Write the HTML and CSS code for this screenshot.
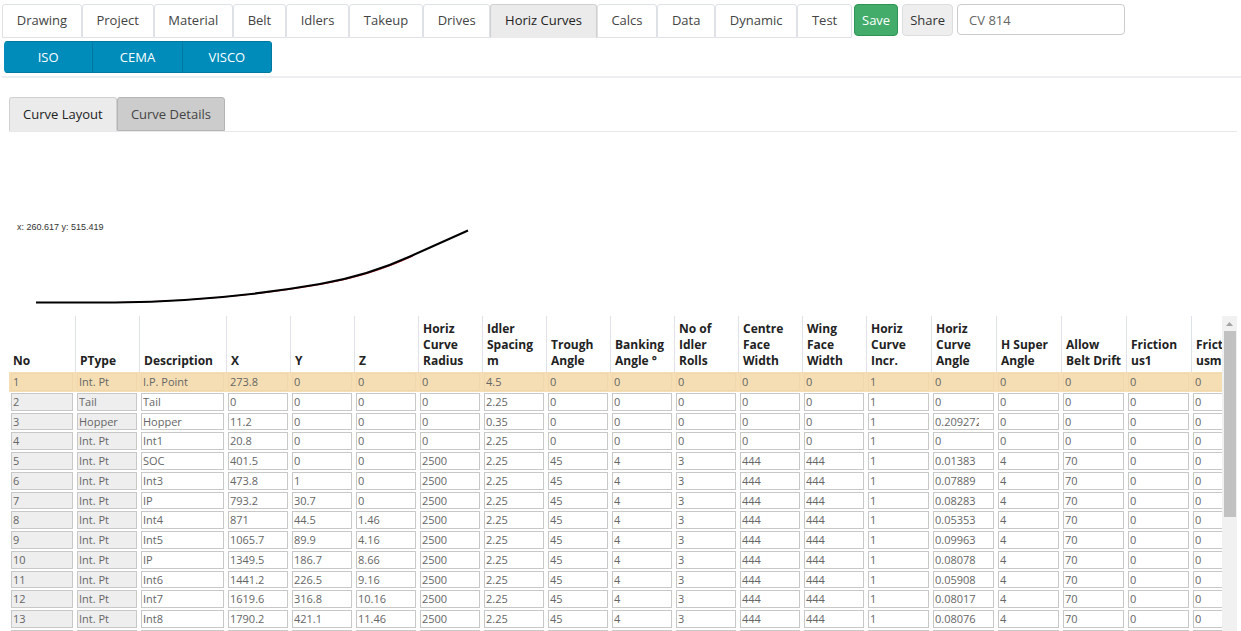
FILE: index.html
```html
<!DOCTYPE html>
<html lang="en">
<head>
<meta charset="utf-8">
<title>Horiz Curves</title>
<link rel="stylesheet" href="styles.css">
</head>
<body>
<header class="topbar">
  <div class="toolbar">
    <nav class="tabs main-tabs">
      <a class="tab" href="#drawing">Drawing</a>
      <a class="tab" href="#project">Project</a>
      <a class="tab" href="#material">Material</a>
      <a class="tab" href="#belt">Belt</a>
      <a class="tab" href="#idlers">Idlers</a>
      <a class="tab" href="#takeup">Takeup</a>
      <a class="tab" href="#drives">Drives</a>
      <a class="tab tab-active" href="#horiz">Horiz Curves</a>
      <a class="tab" href="#calcs">Calcs</a>
      <a class="tab" href="#data">Data</a>
      <a class="tab" href="#dynamic">Dynamic</a>
      <a class="tab" href="#test">Test</a>
    </nav>
    <div class="actions">
      <button class="btn btn-save" type="button">Save</button>
      <button class="btn btn-share" type="button">Share</button>
      <input class="project-name" type="text" aria-label="Conveyor name" value="CV 814">
    </div>
  </div>
  <div class="methods">
    <button class="method" type="button">ISO</button>
    <button class="method" type="button">CEMA</button>
    <button class="method" type="button">VISCO</button>
  </div>
</header>
<main class="content">
  <div class="subbar">
    <nav class="tabs sub-tabs">
      <a class="tab tab-active" href="#layout">Curve Layout</a>
      <a class="tab tab-dim" href="#details">Curve Details</a>
    </nav>
  </div>
  <section class="plot">
    <div class="coords">x: 260.617 y: 515.419</div>
    <svg class="curve" width="480" height="74" viewBox="0 6 480 74" aria-label="Curve layout">
      <path class="curve-base" d="M27 76.500H106C180 75.500 251 69 311 58.500C350 51.700 378 42 404 30"/>
      <path class="curve-line" d="M27 76.500H106C180 75.500 251 68.500 311 58C350 51.200 378 41 401 30.500L421 21.500L459 4.500"/>
    </svg>
  </section>
  <section class="grid">
    <div class="grid-view">
      <table class="points">
        <colgroup>
          <col class="c-no"><col class="c-std"><col class="c-desc">
          <col class="c-std" span="10"><col class="c-wide" span="6">
        </colgroup>
        <thead>
          <tr>
            <th>No</th><th>PType</th><th>Description</th><th>X</th><th>Y</th><th>Z</th>
            <th>Horiz<br>Curve<br>Radius</th><th>Idler<br>Spacing<br>m</th><th>Trough<br>Angle</th>
            <th>Banking<br>Angle °</th><th>No of<br>Idler<br>Rolls</th><th>Centre<br>Face<br>Width</th>
            <th>Wing<br>Face<br>Width</th><th>Horiz<br>Curve<br>Incr.</th><th>Horiz<br>Curve<br>Angle</th>
            <th>H Super<br>Angle</th><th>Allow<br>Belt Drift</th><th>Friction<br>us1</th><th>Friction<br>usm</th>
          </tr>
        </thead>
        <tbody id="rows"></tbody>
      </table>
    </div>
    <div class="scrollbar">
      <svg class="scroll-up" width="15" height="15" viewBox="0 0 15 15" aria-hidden="true"><path d="M4 10L7.500 6L11 10Z"/></svg>
      <div class="scroll-thumb"></div>
    </div>
  </section>
</main>
<script src="app.js"></script>
</body>
</html>
```
FILE: styles.css
```css
* { box-sizing: border-box; }

body {
  margin: 0;
  height: 100vh;
  overflow: hidden;
  display: flex;
  flex-direction: column;
  background: #fff;
  color: #444;
  font: 13px/20px "Open Sans", "Noto Sans", sans-serif;
}

button, input { font: inherit; }

.topbar {
  margin-left: 2px;
  padding: 4px 0 3px;
  border-bottom: 2px solid #eceef2;
}

.toolbar { display: flex; gap: 2px; }

.tabs { display: flex; }
.main-tabs { width: 850px; }
.sub-tabs { width: 216px; }

.tab {
  flex: 1 1 auto;
  height: 34px;
  padding: 6px 0;
  border: 1px solid #dee2e6;
  border-radius: 3px 3px 0 0;
  color: #444;
  text-align: center;
  text-decoration: none;
  white-space: nowrap;
}

.main-tabs .tab { padding: 5px 0 7px; }

.tab-active {
  background: #ebebeb;
  border-color: #d0d0d0;
  border-bottom-color: #ebebeb;
  color: #222;
}

.tab-dim {
  background: #ccc;
  border-color: #b4b4b4;
}

.actions { display: flex; gap: 4px; }

.btn {
  height: 32px;
  padding: 0 7px;
  border: 1px solid #ddd;
  border-radius: 4px;
}

.btn-save {
  background: #43ac6a;
  border-color: #2f9456;
  color: #fff;
}

.btn-share {
  background: #eee;
  color: #333;
}

.project-name {
  width: 168px;
  height: 31px;
  padding: 0 11px;
  border: 1px solid #ccc;
  border-radius: 4px;
  color: #666;
}

.methods {
  display: flex;
  width: 268px;
  margin: 3px 0 0 2px;
  border-radius: 4px;
  overflow: hidden;
}

.method {
  flex: 1;
  height: 32px;
  padding: 0;
  border: 1px solid #0079a1;
  border-left-width: 0;
  background: #008cba;
  color: #fff;
}

.content {
  flex: 1;
  min-height: 0;
  display: flex;
  flex-direction: column;
  padding: 19px 4px 0 9px;
}

.subbar { border-bottom: 1px solid #e6e8ec; }

.plot { padding: 90px 0 10px 0; }

.coords {
  padding-left: 8px;
  color: #333;
  font: 9px/10px "Liberation Sans", Arial, sans-serif;
}

.curve { display: block; overflow: visible; }

.curve-base, .curve-line { fill: none; }
.curve-base { stroke: #d33; stroke-width: 1; }
.curve-line { stroke: #000; stroke-width: 2; }

.grid {
  flex: 1;
  min-height: 0;
  display: flex;
}

.grid-view {
  flex: 1;
  min-width: 0;
  overflow: hidden;
}

.points {
  width: 1247px;
  table-layout: fixed;
  border-collapse: separate;
  border-spacing: 0;
}

.c-no { width: 66px; }
.c-std { width: 64px; }
.c-desc { width: 87px; }
.c-wide { width: 65px; }

.points th {
  height: 56px;
  padding: 4px 0 3px 4px;
  border-left: 1px solid #dfe2e8;
  color: #222;
  font-size: 12px;
  font-weight: bold;
  line-height: 16px;
  text-align: left;
  vertical-align: bottom;
  white-space: nowrap;
}

.points th:first-child { border-left: 0; }

.points td { padding: 1px 2px; }

.cell {
  display: block;
  width: 100%;
  padding: 1px 14px 1px 1px;
  border: 1px solid #c8c8c8;
  border-radius: 0;
  background: #fff;
  color: #666;
  font-size: 11px;
  line-height: 1.25;
}

.cell-text { padding-right: 1px; }
.cell-locked { background: #eee; }

.selected td { background: #f5deb3; }

.selected .cell {
  background: transparent;
  border-color: #f0d8ac;
}

.scrollbar {
  width: 15px;
  background: #f1f1f1;
}

.scroll-up { display: block; fill: #a3a3a3; }

.scroll-thumb {
  height: 186px;
  margin: 0 1px 0 2px;
  background: #c1c1c1;
}
```
FILE: app.js
```js
const columns = ["No", "PType", "Description", "X", "Y", "Z", "Horiz Curve Radius",
  "Idler Spacing", "Trough Angle", "Banking Angle", "No of Idler Rolls",
  "Centre Face Width", "Wing Face Width", "Horiz Curve Incr.", "Horiz Curve Angle",
  "H Super Angle", "Allow Belt Drift", "Friction us1", "Friction usm"];

const straight = (type, name, x, spacing, angle) =>
  [type, name, x, 0, 0, 0, spacing, 0, 0, 0, 0, 0, 1, angle, 0, 0, 0, 0];
const curved = (name, x, y, z, angle) =>
  ["Int. Pt", name, x, y, z, 2500, 2.25, 45, 4, 3, 444, 444, 1, angle, 4, 70, 0, 0];

const points = [
  straight("Int. Pt", "I.P. Point", 273.8, 4.5, 0),
  straight("Tail", "Tail", 0, 2.25, 0),
  straight("Hopper", "Hopper", 11.2, 0.35, 0.2092727),
  straight("Int. Pt", "Int1", 20.8, 2.25, 0),
  curved("SOC", 401.5, 0, 0, "0.01383"),
  curved("Int3", 473.8, 1, 0, "0.07889"),
  curved("IP", 793.2, 30.7, 0, "0.08283"),
  curved("Int4", 871, 44.5, 1.46, "0.05353"),
  curved("Int5", 1065.7, 89.9, 4.16, "0.09963"),
  curved("IP", 1349.5, 186.7, 8.66, "0.08078"),
  curved("Int6", 1441.2, 226.5, 9.16, "0.05908"),
  curved("Int7", 1619.6, 316.8, 10.16, "0.08017"),
  curved("Int8", 1790.2, 421.1, 11.46, "0.08076"),
  Array(18).fill("")
];

const body = document.getElementById("rows");
points.forEach((point, index) => {
  const row = body.insertRow();
  if (index === 0) row.className = "selected";
  [index + 1, ...point].forEach((value, column) => {
    const input = document.createElement("input");
    input.type = "text";
    input.className = "cell";
    if (column < 3) input.classList.add("cell-text");
    if (column < 2) {
      input.classList.add("cell-locked");
      input.readOnly = true;
    }
    input.value = value;
    input.setAttribute("aria-label", `${columns[column]}, row ${index + 1}`);
    row.insertCell().append(input);
  });
});
```
